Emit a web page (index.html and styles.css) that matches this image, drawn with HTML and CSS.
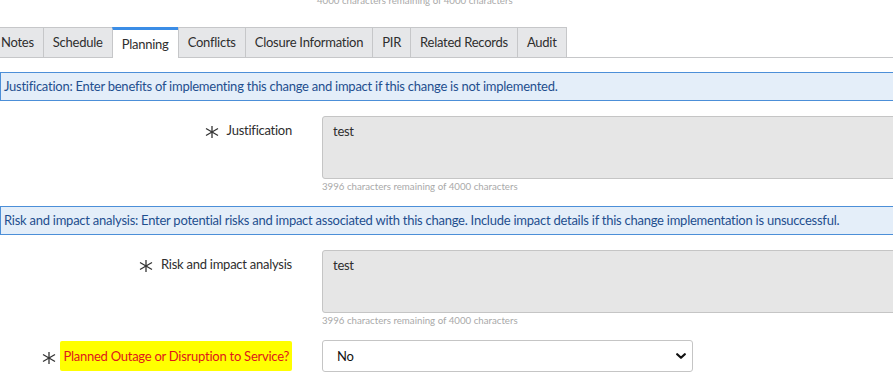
FILE: index.html
```html
<!DOCTYPE html>
<html lang="en">
<head>
  <meta charset="UTF-8">
  <title>Change Request - Planning</title>
  <link rel="stylesheet" href="styles.css">
</head>
<body>
  <div class="counter counter-top">4000 characters remaining of 4000 characters</div>

  <!-- Form tabs -->
  <ul class="tabs">
    <li class="tab">Notes</li>
    <li class="tab">Schedule</li>
    <li class="tab active">Planning</li>
    <li class="tab">Conflicts</li>
    <li class="tab">Closure Information</li>
    <li class="tab">PIR</li>
    <li class="tab">Related Records</li>
    <li class="tab">Audit</li>
  </ul>

  <div class="section-banner">Justification: Enter benefits of implementing this change and impact if this change is not implemented.</div>

  <div class="form-row">
    <label class="field-label">
      <svg class="req" viewBox="0 0 14 12" fill="none" stroke="currentColor" stroke-width="1.3">
        <line x1="7" y1="0" x2="7" y2="12"></line>
        <line x1="1" y1="2.5" x2="13" y2="9.5"></line>
        <line x1="13" y1="2.5" x2="1" y2="9.5"></line>
      </svg>
      <span>Justification</span>
    </label>
    <div class="field">
      <textarea class="textarea" readonly>test</textarea>
      <div class="counter">3996 characters remaining of 4000 characters</div>
    </div>
  </div>

  <div class="section-banner">Risk and impact analysis: Enter potential risks and impact associated with this change. Include impact details if this change implementation is unsuccessful.</div>

  <div class="form-row">
    <label class="field-label">
      <svg class="req" viewBox="0 0 14 12" fill="none" stroke="currentColor" stroke-width="1.3">
        <line x1="7" y1="0" x2="7" y2="12"></line>
        <line x1="1" y1="2.5" x2="13" y2="9.5"></line>
        <line x1="13" y1="2.5" x2="1" y2="9.5"></line>
      </svg>
      <span>Risk and impact analysis</span>
    </label>
    <div class="field">
      <textarea class="textarea" readonly>test</textarea>
      <div class="counter">3996 characters remaining of 4000 characters</div>
    </div>
  </div>

  <div class="form-row select-row">
    <label class="field-label">
      <svg class="req" viewBox="0 0 14 12" fill="none" stroke="currentColor" stroke-width="1.3">
        <line x1="7" y1="0" x2="7" y2="12"></line>
        <line x1="1" y1="2.5" x2="13" y2="9.5"></line>
        <line x1="13" y1="2.5" x2="1" y2="9.5"></line>
      </svg>
      <span class="highlight">Planned Outage or Disruption to Service?</span>
    </label>
    <div class="field">
      <div class="select">
        <span>No</span>
        <svg class="chevron" viewBox="0 0 10 6" fill="none" stroke="currentColor" stroke-width="2.2" stroke-linecap="round" stroke-linejoin="round">
          <polyline points="1.2,1.2 5,4.8 8.8,1.2"></polyline>
        </svg>
      </div>
    </div>
  </div>
</body>
</html>
```

FILE: styles.css
```css
:root {
  --color-text: #2e2e2e;
  --color-muted: #a9a9a9;
  --color-tab: #e6e7e9;
  --color-tab-border: #c6c7c9;
  --color-active: #3b8de6;
  --color-banner: #e4eef9;
  --color-banner-border: #4c8fd8;
  --color-banner-text: #1f4f8f;
  --color-input: #e6e6e6;
  --color-input-border: #c5c5c5;
  --font-sans: "Lato", "Open Sans", sans-serif;
}

* {
  margin: 0;
  padding: 0;
  box-sizing: border-box;
}

body {
  font-family: var(--font-sans);
  font-size: 13px;
  letter-spacing: -0.25px;
  color: var(--color-text);
  background: #ffffff;
  overflow: hidden;
}

.counter {
  font-size: 9.7px;
  line-height: 12px;
  letter-spacing: 0;
  color: var(--color-muted);
}

.counter-top {
  margin-top: -6px;
  padding-left: 317px;
}

/* Tabs */
.tabs {
  list-style: none;
  display: flex;
  margin: 21px 0 0 -9px;
  border-bottom: 1px solid var(--color-tab-border);
}

.tab {
  background: var(--color-tab);
  border: 1px solid var(--color-tab-border);
  border-bottom: none;
  line-height: 29px;
  padding: 0 9px;
  margin-left: -1px;
  white-space: nowrap;
}

.tab:first-child {
  margin-left: 0;
}

.tab.active {
  background: #ffffff;
  border-top: 3px solid var(--color-active);
  line-height: 28px;
  margin-bottom: -1px;
}

/* Section banners */
.section-banner {
  margin-top: 14px;
  height: 29px;
  line-height: 27px;
  padding-left: 3px;
  background: var(--color-banner);
  border: 1px solid var(--color-banner-border);
  border-right: none;
  color: var(--color-banner-text);
  white-space: nowrap;
}

/* Form rows */
.form-row {
  display: grid;
  grid-template-columns: 292px 1fr;
  column-gap: 30px;
  margin-top: 15px;
}

.field-label {
  display: flex;
  justify-content: flex-end;
  align-items: flex-start;
  gap: 8px;
  padding-top: 4px;
  line-height: 20px;
}

.req {
  width: 14px;
  height: 12px;
  margin-top: 6px;
  color: #333333;
  flex-shrink: 0;
}

.field {
  min-width: 0;
}

.textarea {
  display: block;
  width: 620px;
  height: 63px;
  padding: 4px 10px;
  font: inherit;
  line-height: 20px;
  letter-spacing: inherit;
  color: var(--color-text);
  background: var(--color-input);
  border: 1px solid var(--color-input-border);
  border-radius: 3px;
  resize: none;
}

.field .counter {
  margin-top: 1px;
}

.select-row {
  margin-top: 14px;
  align-items: center;
}

.select-row .field-label {
  padding-top: 0;
  align-items: center;
  gap: 4px;
}

.select-row .req {
  margin-top: 4px;
}

.highlight {
  background: #ffff00;
  color: #e0161b;
  padding: 5px 3px;
  border-radius: 2px;
}

.select {
  display: flex;
  justify-content: space-between;
  align-items: center;
  width: 371px;
  height: 32px;
  padding: 0 6px 0 14px;
  background: #ffffff;
  border: 1px solid var(--color-input-border);
  border-radius: 3px;
  color: #111111;
}

.chevron {
  width: 10px;
  height: 6px;
}
```
